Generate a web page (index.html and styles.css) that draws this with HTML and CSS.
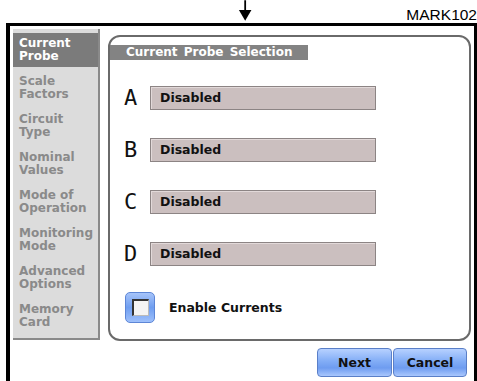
FILE: index.html
```html
<!DOCTYPE html>
<html lang="en">
<head>
  <meta charset="UTF-8">
  <title>Current Probe Selection</title>
  <link rel="stylesheet" href="styles.css">
</head>
<body>
  <div class="topbar">
    <svg class="arrow" width="16" height="24" viewBox="0 0 16 24">
      <line x1="8" y1="0" x2="8" y2="13" stroke="#000" stroke-width="2"/>
      <polygon points="1,11 15,11 8,23" fill="#000"/>
    </svg>
    <span class="mark">MARK102</span>
  </div>

  <div class="frame">
    <ul class="menu">
      <li class="active">Current<br>Probe</li>
      <li>Scale<br>Factors</li>
      <li>Circuit<br>Type</li>
      <li>Nominal<br>Values</li>
      <li>Mode of<br>Operation</li>
      <li>Monitoring<br>Mode</li>
      <li>Advanced<br>Options</li>
      <li>Memory<br>Card</li>
    </ul>

    <div class="main">
      <div class="panel">
        <div class="panel-title">Current Probe Selection</div>

        <div class="probe">
          <span class="letter">A</span>
          <div class="field">Disabled</div>
        </div>
        <div class="probe">
          <span class="letter">B</span>
          <div class="field">Disabled</div>
        </div>
        <div class="probe">
          <span class="letter">C</span>
          <div class="field">Disabled</div>
        </div>
        <div class="probe">
          <span class="letter">D</span>
          <div class="field">Disabled</div>
        </div>

        <label class="check">
          <span class="check-box"><span class="check-inner"></span></span>
          Enable Currents
        </label>
      </div>

      <div class="buttons">
        <button class="btn">Next</button>
        <button class="btn">Cancel</button>
      </div>
    </div>
  </div>
</body>
</html>
```

FILE: styles.css
```css
body {
  margin: 0;
  width: 477px;
  height: 381px;
  overflow: hidden;
  background-color: #fff;
  font-family: "DejaVu Sans", sans-serif;
}

.topbar {
  display: flex;
  align-items: flex-end;
  height: 23px;
}

.arrow {
  display: block;
  margin-left: 238px;
}

.mark {
  margin-left: 154px;
  margin-bottom: 1px;
  font-family: "Liberation Sans", Arial, sans-serif;
  font-size: 15.5px;
  line-height: 15px;
  white-space: nowrap;
}

.frame {
  display: flex;
  margin-left: 6px;
  width: 471px;
  height: 358px;
  box-sizing: border-box;
  border-top: 3px solid #000;
  border-left: 4px solid #000;
  border-right: 3px solid #000;
  padding: 3px 3px 0 3px;
}

/* left menu */
.menu {
  list-style: none;
  margin: 0;
  padding: 4px 0 0 0;
  width: 87px;
  height: 311px;
  box-sizing: border-box;
  background-color: #dcdcdc;
  border-right: 2px solid #8a8a8a;
  border-bottom: 2px solid #8a8a8a;
}

.menu li {
  height: 34px;
  margin-bottom: 4px;
  padding: 4px 0 0 6px;
  box-sizing: border-box;
  font-size: 12px;
  font-weight: bold;
  line-height: 13px;
  color: #8a8a8a;
}

.menu li.active {
  background-color: #7b7b7b;
  color: #fff;
}

/* right side */
.main {
  margin-left: 8px;
  width: 363px;
}

.panel {
  margin-top: 6px;
  height: 306px;
  box-sizing: border-box;
  border: 2px solid #6a6a6a;
  border-radius: 12px;
  background-color: #fff;
}

.panel-title {
  margin-top: 8px;
  width: 198px;
  height: 15px;
  padding-left: 16px;
  box-sizing: border-box;
  background-color: #838383;
  color: #fff;
  font-size: 12px;
  font-weight: bold;
  line-height: 15px;
  word-spacing: 2px;
}

.probe {
  display: flex;
  align-items: center;
  margin-top: 26px;
  height: 24px;
}

.probe + .probe {
  margin-top: 28px;
}

.letter {
  width: 40px;
  padding-left: 14px;
  box-sizing: border-box;
  font-family: "DejaVu Sans Mono", monospace;
  font-size: 22px;
  line-height: 24px;
  color: #111;
}

.field {
  width: 226px;
  height: 24px;
  box-sizing: border-box;
  padding-left: 9px;
  background-color: #cbbfbf;
  border: 1px solid #8c8484;
  box-shadow: inset 1px 1px 0 #e2d9d9;
  font-size: 12.5px;
  font-weight: bold;
  line-height: 22px;
  color: #111;
}

.check {
  display: flex;
  align-items: center;
  margin-top: 26px;
  margin-left: 15px;
  font-size: 12.5px;
  font-weight: bold;
  color: #111;
}

.check-box {
  display: flex;
  align-items: center;
  justify-content: center;
  width: 30px;
  height: 31px;
  margin-right: 14px;
  box-sizing: border-box;
  border: 1px solid #5d86d6;
  border-radius: 5px;
  background: linear-gradient(#a6c4fa, #6f9ef0 50%, #9ec0fb);
}

.check-inner {
  width: 17px;
  height: 17px;
  box-sizing: border-box;
  background-color: #f4f4f4;
  border-top: 2px solid #333;
  border-left: 2px solid #333;
  border-right: 1px solid #bbb;
  border-bottom: 1px solid #bbb;
}

.buttons {
  display: flex;
  justify-content: flex-end;
  gap: 1px;
  margin-top: 7px;
  margin-right: 4px;
}

.btn {
  width: 75px;
  height: 29px;
  padding: 0;
  border: 1px solid #5a7fc8;
  border-radius: 4px;
  background: linear-gradient(#b7d1ff, #82adf6 45%, #6e9cf0 70%, #a9c7fd);
  font-family: "DejaVu Sans", sans-serif;
  font-size: 12.5px;
  font-weight: bold;
  color: #111;
}

.btn + .btn {
  width: 74px;
}
```
